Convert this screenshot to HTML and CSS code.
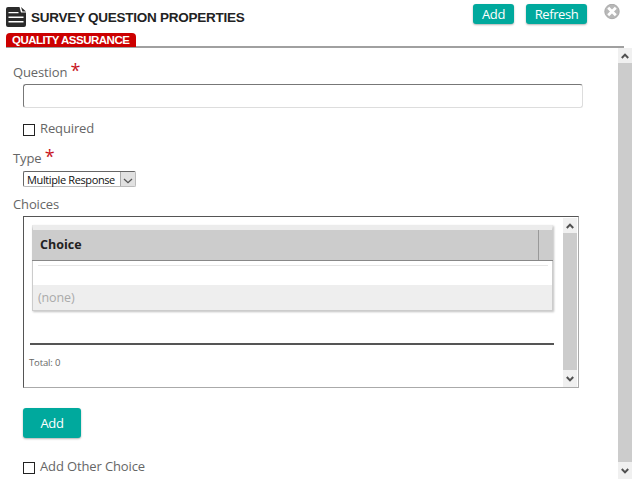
FILE: index.html
```html
<!DOCTYPE html>
<html lang="en">
<head>
  <meta charset="UTF-8">
  <title>Survey Question Properties</title>
  <link rel="stylesheet" href="styles.css">
</head>
<body>

  <div class="header">
    <div class="header-left">
      <div class="title-row">
        <svg class="page-icon" width="20" height="20" viewBox="0 0 20 20">
          <path fill="#2b2b2b" d="M2 0H13.5L15 5.5H20V18Q20 20 18 20H2Q0 20 0 18V2Q0 0 2 0ZM15 0L20 4.6H16.4Z"/>
          <path stroke="#fff" stroke-width="1.4" d="M2.5 5.6H12.5M2.5 10.2H17.5M2.5 14.8H17.5"/>
        </svg>
        <h1 class="page-title">SURVEY QUESTION PROPERTIES</h1>
      </div>
      <div class="tab">QUALITY ASSURANCE</div>
    </div>
    <div class="header-actions">
      <button class="btn btn-add">Add</button>
      <button class="btn btn-refresh">Refresh</button>
      <svg class="close-icon" width="16" height="16" viewBox="0 0 16 16">
        <circle cx="8" cy="7.5" r="7.2" fill="#b8b8b8" stroke="#aaa"/>
        <path stroke="#fff" stroke-width="2.8" d="M4.2 3.7L11.8 11.3M11.8 3.7L4.2 11.3"/>
      </svg>
    </div>
  </div>

  <div class="content">
    <div class="form">
      <div class="label">Question <span class="star">*</span></div>
      <input class="text-input" type="text">
      <label class="check-row required-row"><span class="checkbox"></span><span class="check-text">Required</span></label>

      <div class="label type-label">Type <span class="star">*</span></div>
      <div class="select">
        <span class="select-text">Multiple Response</span>
        <span class="select-arrow">
          <svg width="10" height="6" viewBox="0 0 10 6"><path fill="none" stroke="#555" stroke-width="1.3" d="M1 1L5 4.7L9 1"/></svg>
        </span>
      </div>

      <div class="label choices-label">Choices</div>
      <div class="choices-box">
        <div class="choices-body">
          <div class="grid">
            <div class="grid-head">
              <div class="grid-title">Choice</div>
              <div class="grid-tool"></div>
            </div>
            <div class="grid-filter"></div>
            <div class="grid-empty">(none)</div>
          </div>
          <div class="grid-line"></div>
          <div class="total">Total: 0</div>
        </div>
        <div class="scrollbar inner-scroll">
          <div class="scroll-up"><svg width="8" height="6" viewBox="0 0 8 6"><path fill="none" stroke="#505050" stroke-width="2" d="M.8 5L4 1.6L7.2 5"/></svg></div>
          <div class="scroll-down"><svg width="8" height="6" viewBox="0 0 8 6"><path fill="none" stroke="#505050" stroke-width="2" d="M.8 1L4 4.4L7.2 1"/></svg></div>
        </div>
      </div>

      <button class="btn btn-choice">Add</button>
      <label class="check-row other-row"><span class="checkbox"></span><span class="check-text">Add Other Choice</span></label>
    </div>

    <div class="scrollbar">
      <div class="scroll-up"><svg width="8" height="6" viewBox="0 0 8 6"><path fill="none" stroke="#505050" stroke-width="2" d="M.8 5L4 1.6L7.2 5"/></svg></div>
      <div class="scroll-down"><svg width="8" height="6" viewBox="0 0 8 6"><path fill="none" stroke="#505050" stroke-width="2" d="M.8 1L4 4.4L7.2 1"/></svg></div>
    </div>
  </div>

</body>
</html>
```
FILE: styles.css
```css
* {
  margin: 0;
  padding: 0;
  box-sizing: border-box;
}

body {
  width: 632px;
  height: 485px;
  overflow: hidden;
  background-color: #fff;
  font-family: "Open Sans", "Noto Sans", sans-serif;
  font-size: 13px;
  letter-spacing: -0.13px;
  color: #666;
  white-space: nowrap;
}

.header {
  display: flex;
  justify-content: space-between;
  width: 618px;
  height: 48px;
  margin-left: 6px;
  border-bottom: 2px solid #a0a0a0;
}

.header-left {
  padding-top: 7px;
}

.title-row {
  display: flex;
  gap: 5px;
  height: 26px;
}

.page-icon,
.close-icon {
  display: block;
}

.page-title {
  font-family: "Liberation Sans", Arial, sans-serif;
  font-size: 13.5px;
  letter-spacing: -0.25px;
  line-height: 22px;
  color: #222;
}

.tab {
  width: 130px;
  height: 14px;
  padding-left: 6px;
  background-color: #c00;
  border-radius: 4px 4px 0 0;
  font-family: "Liberation Sans", Arial, sans-serif;
  font-size: 11.5px;
  font-weight: bold;
  letter-spacing: -0.5px;
  line-height: 15px;
  color: #fff;
}

.header-actions {
  display: flex;
  padding: 4px 4px 0 0;
}

.btn {
  display: block;
  border: none;
  border-radius: 3px;
  background-color: #00a99d;
  box-shadow: 0 1px 2px rgba(0, 0, 0, 0.3);
  font-family: inherit;
  font-size: 13px;
  letter-spacing: -0.4px;
  color: #fff;
}

.btn-add {
  width: 41px;
  height: 20px;
  margin-right: 12px;
  padding-bottom: 1px;
}

.btn-refresh {
  width: 61px;
  height: 20px;
  margin-right: 17px;
  padding-bottom: 1px;
}

.content {
  display: flex;
  height: 431px;
}

.form {
  width: 618px;
  padding: 15px 0 0 13px;
}

.label {
  height: 18px;
  line-height: 18px;
}

.star {
  font-size: 18px;
  line-height: 1px;
  color: #c8141e;
}

.text-input {
  display: block;
  width: 560px;
  height: 24px;
  margin: 3px 0 0 10px;
  border: 1px solid #ddd;
  border-top: 1px solid #777;
  border-left-color: #777;
  border-radius: 3px;
  outline: none;
}

.check-row {
  display: flex;
  align-items: center;
  gap: 5px;
  height: 18px;
  margin-left: 10px;
}

.checkbox {
  width: 12px;
  height: 12px;
  margin-top: 1px;
  border: 1px solid #222;
}

.check-text {
  padding-bottom: 2px;
}

.required-row {
  margin-top: 12px;
}

.type-label {
  margin-top: 11px;
}

.select {
  display: flex;
  width: 113px;
  height: 16px;
  margin: 4px 0 0 10px;
  border: 1px solid #bbb;
  border-top-color: #666;
  border-left-color: #666;
  border-radius: 2px;
}

.select-text {
  width: 96px;
  padding-left: 3px;
  font-size: 11px;
  letter-spacing: -0.38px;
  line-height: 15px;
  color: #111;
}

.select-arrow {
  display: flex;
  align-items: center;
  justify-content: center;
  width: 15px;
  padding-top: 3px;
  border-left: 1px solid #aaa;
  background-color: #e1e1e1;
}

.choices-label {
  margin-top: 8px;
}

.choices-box {
  display: flex;
  width: 556px;
  height: 172px;
  margin: 3px 0 0 10px;
  border: 1px solid #aaa;
  border-top-color: #555;
  border-left-color: #555;
}

.choices-body {
  width: 539px;
  padding-top: 8px;
}

.grid {
  width: 521px;
  height: 86px;
  margin-left: 8px;
  border: 1px solid #ccc;
  border-top: 5px solid #ececec;
  box-shadow: 1px 1px 2px rgba(0, 0, 0, 0.25);
}

.grid-head {
  display: flex;
  height: 31px;
  margin: 0 -1px;
  background-color: #ccc;
  border-bottom: 1px solid #888;
}

.grid-title {
  width: 507px;
  padding-left: 8px;
  border-right: 1px solid #999;
  font-size: 12.5px;
  font-weight: bold;
  letter-spacing: 0;
  line-height: 29px;
  color: #222;
}

.grid-filter {
  height: 20px;
  margin: 4px 4px 0 5px;
  border-top: 1px solid #e6e6e6;
}

.grid-empty {
  height: 25px;
  padding-left: 5px;
  background-color: #eee;
  font-size: 12.5px;
  line-height: 25px;
  color: #aaa;
}

.grid-line {
  width: 524px;
  height: 2px;
  margin: 32px 0 0 6px;
  background-color: #555;
}

.total {
  margin: 9px 0 0 5px;
  font-size: 9.5px;
  line-height: 18px;
}

.scrollbar {
  display: flex;
  flex-direction: column;
  justify-content: space-between;
  width: 14px;
  background-color: #ccc;
}

.inner-scroll {
  margin-top: 1px;
}

.scroll-up,
.scroll-down {
  display: flex;
  align-items: center;
  justify-content: center;
  height: 15px;
  background-color: #f0f0f0;
}

.scroll-down {
  height: 17px;
}

.btn-choice {
  width: 58px;
  height: 30px;
  margin: 20px 0 0 10px;
  padding-bottom: 1px;
}

.other-row {
  margin-top: 20px;
}
```
